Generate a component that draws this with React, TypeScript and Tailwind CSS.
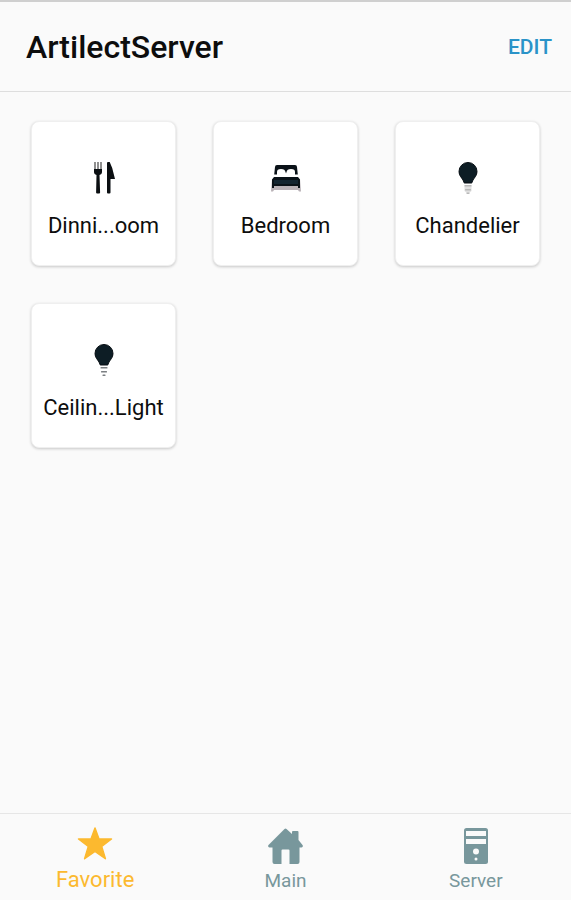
import React, { useState } from "react";

type IconProps = { className?: string };

function CutleryIcon({ className }: IconProps) {
  return (
    <svg viewBox="0 0 36 36" className={className} aria-hidden="true">
      <g fill="#8f8f8f">
        <rect x="8" y="2" width="2" height="8" />
        <rect x="11" y="2" width="2" height="8" />
        <rect x="14" y="2" width="2" height="8" />
      </g>
      <g fill="#0b0f12">
        <path d="M8 9h8v3c0 1.500-1 2.500-2.500 3l.6 17.500a1 1 0 0 1-1 1h-2a1 1 0 0 1-1-1L10.500 15C9 14.500 8 13.500 8 12z" />
        <path d="M21.500 2h2.200l2.500 6 2.800 11h-4.500v13.500a1 1 0 0 1-1 1h-1.500a1 1 0 0 1-1-1V3z" />
      </g>
    </svg>
  );
}

function BedIcon({ className }: IconProps) {
  return (
    <svg viewBox="0 0 36 36" className={className} aria-hidden="true">
      <path fill="#b9b2b7" d="M4 19h28l1 12.500h-2L30 30H6l-1 1.500H3z" />
      <path
        fill="#0a1218"
        d="M9 5h18a2 2 0 0 1 2 2l.8 7.500H27V12c0-2-1-3-4-3s-4 1-4.500 3l-.5 1.500-.5-1.500c-.5-2-1.500-3-4.500-3s-4 1-4 3v2.500H6.200L7 7a2 2 0 0 1 2-2z"
      />
      <path fill="#0a1218" d="M6 17h24l2 2.500V28h-2v-2H6v2H4v-8.500z" />
      <rect x="6" y="20" width="24" height="4" fill="#132530" />
    </svg>
  );
}

function BulbIcon({ className, lit }: IconProps & { lit?: boolean }) {
  return (
    <svg viewBox="0 0 36 36" className={className} aria-hidden="true">
      <path
        fill="#0d1d25"
        stroke="#060d12"
        d="M18 2.500a9 9 0 0 1 9 9c0 4-2.500 6-4 8.500-.8 1.500-.7 3-1.500 3h-7c-.8 0-.7-1.500-1.500-3-1.500-2.500-4-4.500-4-8.500a9 9 0 0 1 9-9z"
      />
      {lit && <path fill="#e0e0e0" d="M14.500 25h7v6L18 34l-3.500-3z" />}
      <g fill={lit ? "#b9b9b9" : "#7b7f82"}>
        <rect x="14.500" y="25" width="7" height="1.500" rx=".5" />
        <rect x="15" y="29" width="6" height="1.500" rx=".5" />
        <rect x="16.500" y="32.500" width="3" height="1.500" rx=".5" />
      </g>
    </svg>
  );
}

function StarIcon({ className }: IconProps) {
  return (
    <svg viewBox="0 0 36 36" className={className} aria-hidden="true">
      <path
        fill="currentColor"
        stroke="currentColor"
        strokeWidth="1.500"
        strokeLinejoin="round"
        d="M18 2l4 11h12.500l-9.800 7.500 3.700 12.200L18 25.500 7.600 32.700l3.700-12.200L1.500 13H14z"
      />
    </svg>
  );
}

function HomeIcon({ className }: IconProps) {
  return (
    <svg viewBox="0 0 36 36" className={className} aria-hidden="true">
      <path
        fill="currentColor"
        d="M17.500 1a1.500 1.500 0 0 1 2 0l5.500 5V4a1 1 0 0 1 1-1h4.500a1 1 0 0 1 1 1v8l4 5c.8 1 .2 2.500-1 2.500h-2V34a2 2 0 0 1-2 2h-8V22.500a1 1 0 0 0-1-1h-6a1 1 0 0 0-1 1V36H7.500a2 2 0 0 1-2-2V19.500H2.500c-1.200 0-1.800-1.500-1-2.500z"
      />
    </svg>
  );
}

function ServerIcon({ className }: IconProps) {
  return (
    <svg viewBox="0 0 36 36" className={className} aria-hidden="true">
      <rect x="6" y="0" width="24" height="36" rx="2.500" fill="currentColor" />
      <g fill="#fafafa">
        <rect x="8" y="3" width="20" height="5" />
        <rect x="8" y="11" width="20" height="5" />
        <circle cx="18" cy="23.500" r="3" />
        <circle cx="18" cy="31" r="1.500" />
      </g>
    </svg>
  );
}

const devices = [
  { name: "Dinni...oom", icon: <CutleryIcon className="size-9" /> },
  { name: "Bedroom", icon: <BedIcon className="size-9" /> },
  { name: "Chandelier", icon: <BulbIcon className="size-9" lit /> },
  { name: "Ceilin...Light", icon: <BulbIcon className="size-9" /> },
];

const tabs = [
  { name: "Favorite", Icon: StarIcon },
  { name: "Main", Icon: HomeIcon },
  { name: "Server", Icon: ServerIcon },
];

function App() {
  const [active, setActive] = useState<string>("Favorite");

  return (
    <div className="flex min-h-screen flex-col border-t-2 border-[#cfcfcf] bg-[#fafafa] font-[Roboto,sans-serif] text-[#0d0d0d]">
      <header className="flex h-[90px] items-center justify-between border-b border-[#dedede] pr-[19px] pl-[26px]">
        <h1 className="text-[32px] leading-8 font-medium">ArtilectServer</h1>
        <button className="cursor-pointer text-[21px] leading-7 font-medium text-[#2a93c8]">
          EDIT
        </button>
      </header>

      <main className="flex-1 px-[31px] pt-[29px] pb-8">
        <ul className="grid grid-cols-3 gap-[37px]">
          {devices.map((item, i) => (
            <li key={i}>
              <button className="flex aspect-square w-full cursor-pointer flex-col items-center justify-center gap-4 rounded-lg border border-[#efefef] bg-white pt-3 shadow-[0_1px_3px_rgba(0,0,0,0.2)]">
                {item.icon}
                <span className="text-[22px] leading-7">{item.name}</span>
              </button>
            </li>
          ))}
        </ul>
      </main>

      <nav className="grid h-[87px] grid-cols-3 border-t border-[#e6e6e6]">
        {tabs.map(({ name, Icon }) => (
          <button
            key={name}
            onClick={() => setActive(name)}
            className={
              active === name
                ? "flex cursor-pointer flex-col items-center gap-1 pt-3 text-[22px] leading-7 text-[#fcb92f]"
                : "flex cursor-pointer flex-col items-center gap-[3px] pt-[14px] text-[19px] leading-7 text-[#78979c]"
            }
          >
            <Icon className="size-9" />
            {name}
          </button>
        ))}
      </nav>
    </div>
  );
}

export default App;
